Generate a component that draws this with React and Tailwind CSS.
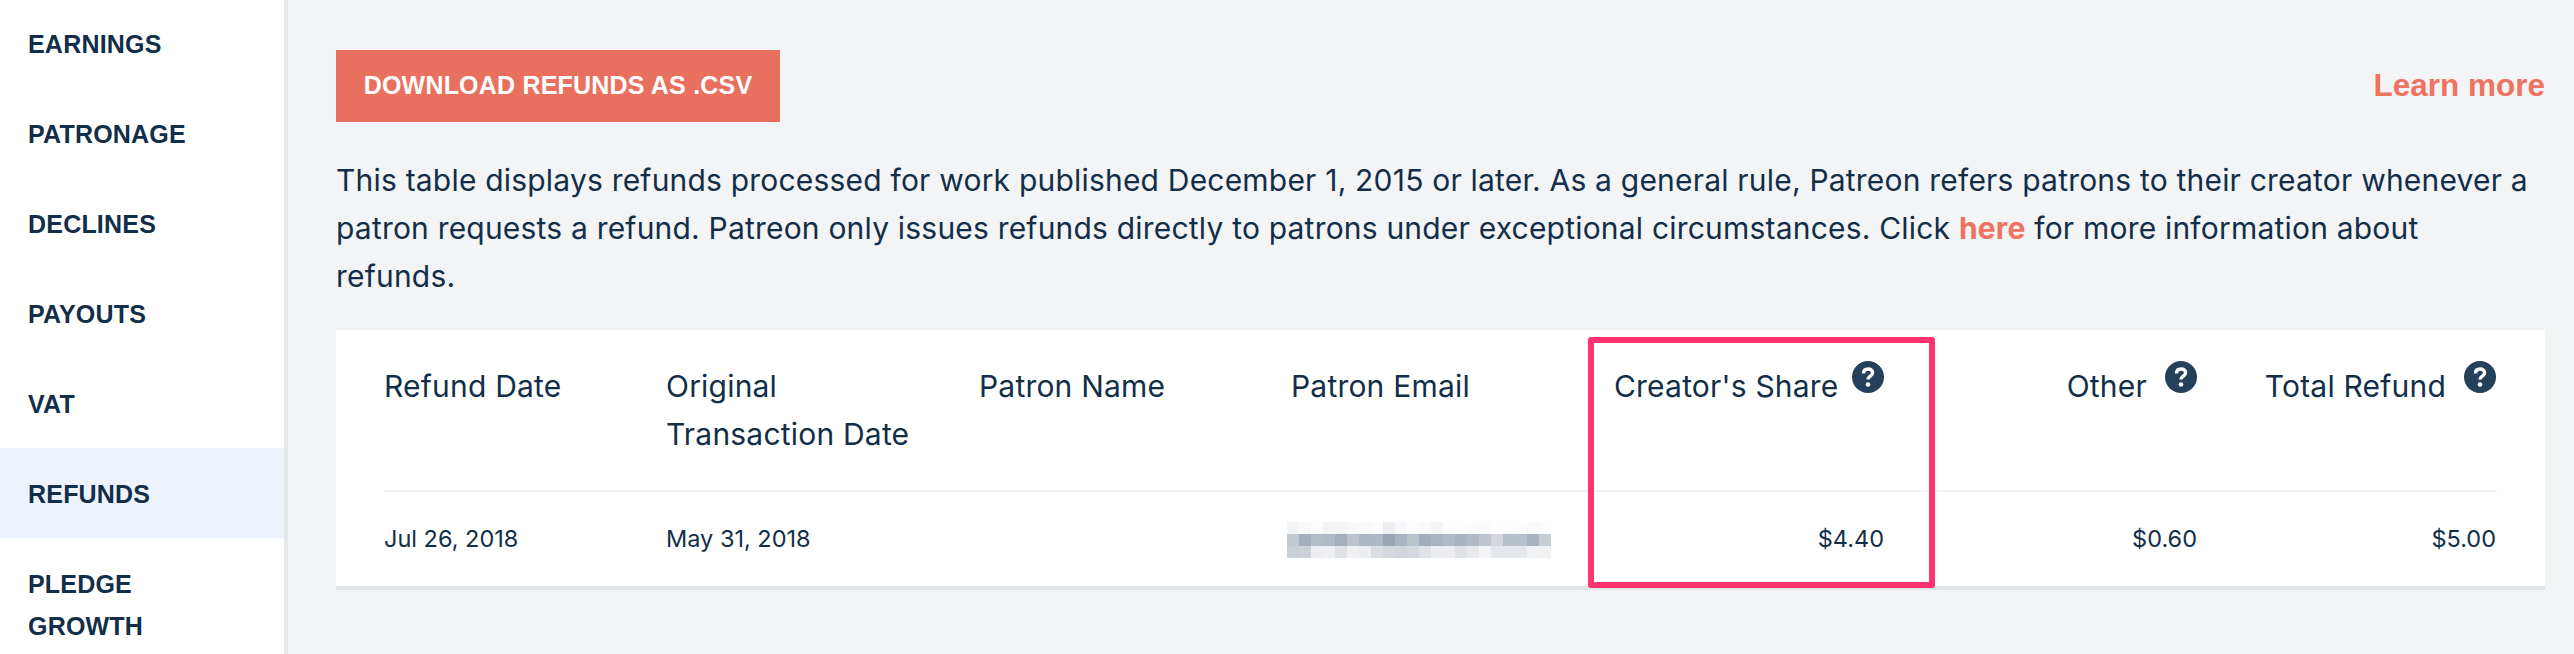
const navItems = ['EARNINGS', 'PATRONAGE', 'DECLINES', 'PAYOUTS', 'VAT', 'REFUNDS', 'PLEDGE GROWTH'];

const pixelRows = [
    ['#f3f4f6', '#f8f9fa', '#fdfdfd', '#f3f4f6', '#f3f4f6', '#f8f8f9', '#f9f9fa', '#fdfdfd', '#eceef1', '#f6f7f8', '#fefefe', '#fafafb', '#f3f4f6', '#fdfdfd', '#fdfdfd', '#fcfcfd', '#fbfcfc', '#fefefe', '#fdfdfd', '#fdfdfd', '#f8f9fa', '#fcfdfd'],
    ['#c0c8d0', '#a4afbb', '#b4bcc6', '#b0b9c4', '#a4afbb', '#bcc3cc', '#aeb7c2', '#aeb7c2', '#9aa6b4', '#aab4bf', '#bac2cb', '#a0acb9', '#aab4bf', '#b0b9c4', '#a9b3bf', '#b0b9c4', '#bfc6cf', '#d3d7dd', '#b7bfc9', '#b7bfc9', '#a9b3bf', '#c7cdd5'],
    ['#c9cfd7', '#cdd2d9', '#eceef1', '#eff0f2', '#dfe2e7', '#eff0f2', '#eceef1', '#dadee3', '#d5d9df', '#d3d7dd', '#d5d9df', '#dfe2e7', '#eceef1', '#eceef1', '#dfe2e7', '#e7e9ed', '#f3f4f5', '#e3e6ea', '#e3e6ea', '#e3e6ea', '#f0f1f3', '#f0f1f3'],
];

function HelpIcon() {
    return (
        <svg viewBox="0 0 32 32" className="w-8 h-8 shrink-0 mt-[-1px]">
            <circle cx="16" cy="16" r="16" fill="#25405a" />
            <path d="M11.500 12.500c0-3 2-4.500 4.700-4.500 2.600 0 4.400 1.600 4.400 3.800 0 3.300-4.600 3.400-4.600 6.700" fill="none" stroke="#fff" strokeWidth="3.400" />
            <circle cx="16" cy="23.500" r="2.300" fill="#fff" />
        </svg>
    );
}

export default function App() {
    return (
        <div className="flex w-[2574px] h-[654px] overflow-hidden bg-[#f3f4f6] text-[#122e49] font-['Inter',sans-serif]">
            <nav className="w-[288px] shrink-0 bg-white border-r-4 border-[#e6e8eb] -mt-[2px]">
                {navItems.map((item) => (
                    <div
                        key={item}
                        className={`pl-7 pr-16 pt-[25px] pb-[23px] text-[25px] tracking-[0.2px] leading-[42px] font-bold font-['Liberation_Sans',sans-serif] ${item === 'REFUNDS' ? 'bg-[#ecf3fd]' : ''}`}
                    >
                        {item}
                    </div>
                ))}
            </nav>

            <main className="relative flex-1 pl-[48px] pr-[29px] pt-[50px]">
                <div className="flex items-center justify-between">
                    <button className="h-[72px] w-[444px] bg-[#e9705e] text-white text-[25px] tracking-[0.2px] font-bold font-['Liberation_Sans',sans-serif]">
                        DOWNLOAD REFUNDS AS .CSV
                    </button>
                    <a className="text-[#ee7360] text-[31.500px] font-bold font-['Liberation_Sans',sans-serif]">Learn more</a>
                </div>

                <p className="mt-[34px] text-[30px] tracking-[0.2px] leading-[48px]">
                    This table displays refunds processed for work published December 1, 2015 or later. As a general rule, Patreon refers patrons to their creator whenever a patron requests a refund. Patreon only issues refunds directly to patrons under exceptional circumstances. Click <a className="text-[#ee7360] font-bold">here</a> for more information about refunds.
                </p>

                <div className="mt-[30px] bg-white border-b-4 border-[#e1e4e8] px-[48px] h-[260px] text-[#122e49]">
                    <div className="grid grid-cols-[282px_313px_312px_323px_270px_313px_299px] h-[162px] pt-[32px] border-b-2 border-[#f3f4f5] text-[30px] tracking-[0.2px] leading-[48px]">
                        <div>Refund Date</div>
                        <div>Original<br />Transaction Date</div>
                        <div>Patron Name</div>
                        <div>Patron Email</div>
                        <div className="flex justify-between"><span>Creator's Share</span><HelpIcon /></div>
                        <div className="flex justify-end gap-[18px]"><span>Other</span><HelpIcon /></div>
                        <div className="flex justify-end gap-[18px]"><span>Total Refund</span><HelpIcon /></div>
                    </div>
                    <div className="grid grid-cols-[282px_313px_312px_323px_270px_313px_299px] items-center h-[94px] text-[23.500px]">
                        <div>Jul 26, 2018</div>
                        <div>May 31, 2018</div>
                        <div></div>
                        <svg viewBox="0 0 264 36" className="w-[264px] h-[36px] ml-[-4px] mt-[2px]" shapeRendering="crispEdges">
                            {pixelRows.map((row, y) => row.map((fill, x) => (
                                <rect key={`${x}-${y}`} x={x * 12} y={y * 12} width="12" height="12" fill={fill} />
                            )))}
                        </svg>
                        <div className="text-right">$4.40</div>
                        <div className="text-right">$0.60</div>
                        <div className="text-right">$5.00</div>
                    </div>
                </div>

                {/* highlight drawn over the table */}
                <div className="absolute left-[1300px] top-[337px] w-[347px] h-[251px] border-[6px] border-[#ff336f] rounded-[3px]"></div>
            </main>
        </div>
    );
}
